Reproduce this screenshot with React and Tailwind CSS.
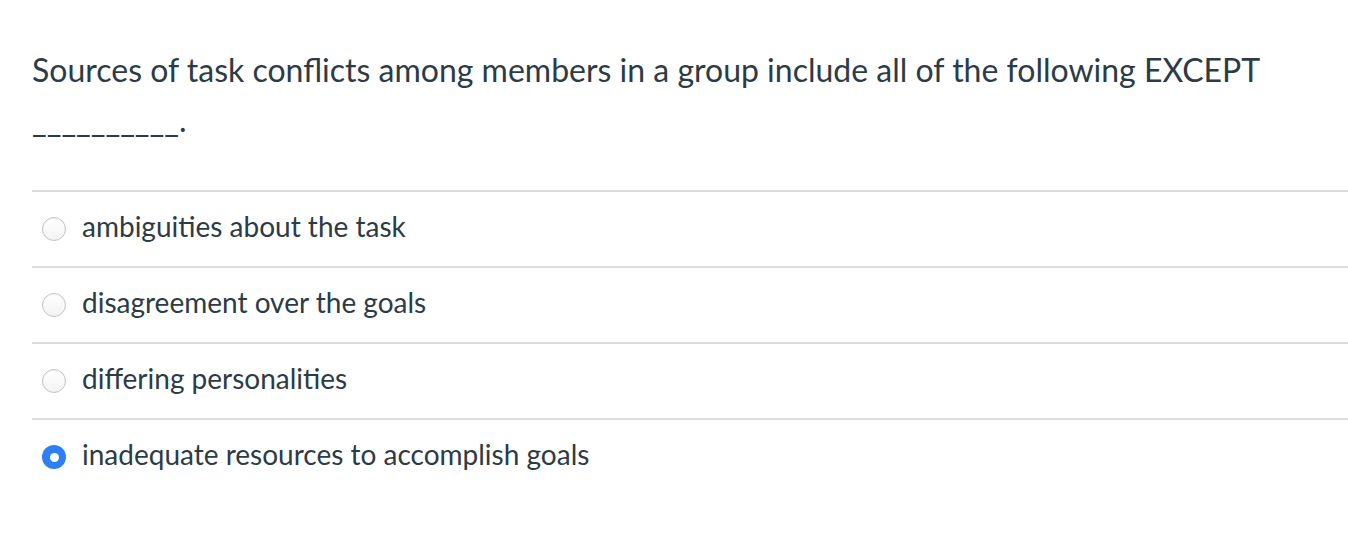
import React from 'react';

const options = [
  { id: 1, text: 'ambiguities about the task', checked: false },
  { id: 2, text: 'disagreement over the goals', checked: false },
  { id: 3, text: 'differing personalities', checked: false },
  { id: 4, text: 'inadequate resources to accomplish goals', checked: true },
];

function Radio({ checked }) {
  if (checked) {
    return (
      <span className="flex h-[24px] w-[24px] shrink-0 items-center justify-center rounded-full bg-[#2e7ff5]">
        <span className="h-[9px] w-[9px] rounded-full bg-white" />
      </span>
    );
  }
  return (
    <span className="h-[24px] w-[24px] shrink-0 rounded-full border border-[#c4c4c4] bg-gradient-to-b from-white to-[#f3f3f3] shadow-[inset_0_1px_1px_rgba(0,0,0,0.05)]" />
  );
}

export default function App() {
  return (
    <div className="h-[542px] w-[1348px] bg-white pl-[32px] pt-[45px] font-['Lato','Open_Sans',sans-serif] text-[#2d3b45]">
      <p className="text-[32px] leading-[50px]">
        Sources of task conflicts among members in a group include all of the following EXCEPT
        <br />
        __________.
      </p>
      <ul className="mt-[45px]">
        {options.map(o => (
          <li key={o.id} className="flex h-[76px] items-center gap-[16px] border-t-2 border-[#dcdcdc] pl-[10px]">
            <Radio checked={o.checked} />
            <span className="-mt-[7px] text-[28px]">{o.text}</span>
          </li>
        ))}
      </ul>
    </div>
  );
}
